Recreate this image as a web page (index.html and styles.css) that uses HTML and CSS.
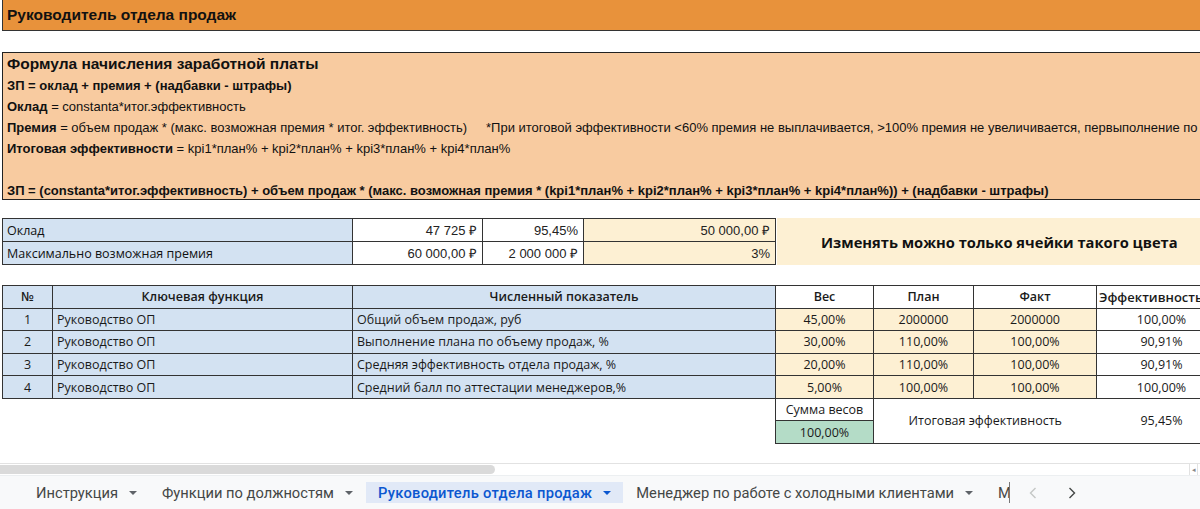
FILE: index.html
```html
<!DOCTYPE html>
<html lang="ru">
<head>
<meta charset="utf-8">
<title>Руководитель отдела продаж</title>
<link rel="stylesheet" href="styles.css">
</head>
<body>
<div class="page">
  <main class="sheet">
    <div class="title-bar">Руководитель отдела продаж</div>

    <section class="formula">
      <div class="f-title">Формула начисления заработной платы</div>
      <div class="f-line bold">ЗП = оклад + премия + (надбавки - штрафы)</div>
      <div class="f-line"><b>Оклад</b> = constanta*итог.эффективность</div>
      <div class="f-line"><b>Премия</b> = объем продаж * (макс. возможная премия * итог. эффективность)<span class="note">*При итоговой эффективности &lt;60% премия не выплачивается, &gt;100% премия не увеличивается, первыполнение по</span></div>
      <div class="f-line"><b>Итоговая эффективности</b> = kpi1*план% + kpi2*план% + kpi3*план% + kpi4*план%</div>
      <div class="f-line"></div>
      <div class="f-line bold">ЗП = (constanta*итог.эффективность) + объем продаж * (макс. возможная премия * (kpi1*план% + kpi2*план% + kpi3*план% + kpi4*план%)) + (надбавки - штрафы)</div>
    </section>

    <div class="salary-row">
      <table class="salary">
        <colgroup><col class="c-label"><col class="c-v1"><col class="c-v2"><col class="c-v3"></colgroup>
        <tr>
          <td class="lbl blue">Оклад</td>
          <td class="num">47 725 ₽</td>
          <td class="num">95,45%</td>
          <td class="num peach">50 000,00 ₽</td>
        </tr>
        <tr>
          <td class="lbl blue">Максимально возможная премия</td>
          <td class="num">60 000,00 ₽</td>
          <td class="num">2 000 000 ₽</td>
          <td class="num peach">3%</td>
        </tr>
      </table>
      <div class="notice">Изменять можно только ячейки такого цвета</div>
    </div>

    <table class="kpi">
      <colgroup>
        <col class="k-no"><col class="k-func"><col class="k-ind"><col class="k-w"><col class="k-plan"><col class="k-fact"><col class="k-eff">
      </colgroup>
      <tr class="head">
        <th class="blue">№</th>
        <th class="blue">Ключевая функция</th>
        <th class="blue">Численный показатель</th>
        <th>Вес</th>
        <th>План</th>
        <th>Факт</th>
        <th class="eff-head">Эффективность</th>
      </tr>
      <tr>
        <td class="blue ctr">1</td><td class="blue">Руководство ОП</td><td class="blue">Общий объем продаж, руб</td>
        <td class="peach ctr">45,00%</td><td class="peach ctr">2000000</td><td class="peach ctr">2000000</td><td class="ctr">100,00%</td>
      </tr>
      <tr>
        <td class="blue ctr">2</td><td class="blue">Руководство ОП</td><td class="blue">Выполнение плана по объему продаж, %</td>
        <td class="peach ctr">30,00%</td><td class="peach ctr">110,00%</td><td class="peach ctr">100,00%</td><td class="ctr">90,91%</td>
      </tr>
      <tr>
        <td class="blue ctr">3</td><td class="blue">Руководство ОП</td><td class="blue">Средняя эффективность отдела продаж, %</td>
        <td class="peach ctr">20,00%</td><td class="peach ctr">110,00%</td><td class="peach ctr">100,00%</td><td class="ctr">90,91%</td>
      </tr>
      <tr>
        <td class="blue ctr">4</td><td class="blue">Руководство ОП</td><td class="blue">Средний балл по аттестации менеджеров,%</td>
        <td class="peach ctr">5,00%</td><td class="peach ctr">100,00%</td><td class="peach ctr">100,00%</td><td class="ctr">100,00%</td>
      </tr>
      <tr class="sum">
        <td class="none" colspan="3" rowspan="2"></td>
        <td class="ctr sum-lbl">Сумма весов</td>
        <td class="ctr total" colspan="2" rowspan="2">Итоговая эффективность</td>
        <td class="ctr total-val" rowspan="2">95,45%</td>
      </tr>
      <tr class="sum">
        <td class="ctr green">100,00%</td>
      </tr>
    </table>
  </main>

  <div class="hscroll">
    <div class="thumb"></div>
    <span class="scroll-btn">◂</span>
  </div>

  <nav class="tabs">
    <div class="tab-list">
      <div class="tab">Инструкция<span class="caret"></span></div>
      <div class="tab">Функции по должностям<span class="caret"></span></div>
      <div class="tab active">Руководитель отдела продаж<span class="caret"></span></div>
      <div class="tab">Менеджер по работе с холодными клиентами<span class="caret"></span></div>
      <div class="tab">Менеджер по работе с клиентами<span class="caret"></span></div>
    </div>
    <div class="tab-nav">
      <span class="nav-btn disabled"><svg width="8" height="12" viewBox="0 0 8 12"><path d="M6.5 1 L1.5 6 L6.5 11" fill="none" stroke="currentColor" stroke-width="1.4"/></svg></span>
      <span class="nav-btn"><svg width="8" height="12" viewBox="0 0 8 12"><path d="M1.5 1 L6.5 6 L1.5 11" fill="none" stroke="currentColor" stroke-width="1.4"/></svg></span>
    </div>
  </nav>
</div>
</body>
</html>
```

FILE: styles.css
```css
* { box-sizing: border-box; }
html, body { margin: 0; padding: 0; background: #fff; }
body { font-family: "Liberation Sans", Arial, sans-serif; color: #111; }

.page {
  width: 1200px;
  height: 509px;
  overflow: hidden;
  display: flex;
  flex-direction: column;
}

.sheet {
  height: 463px;
  overflow: hidden;
  flex: none;
}

.title-bar {
  margin-left: 2px;
  width: 1260px;
  height: 31px;
  background: #e8923b;
  border-left: 1px solid #333;
  border-bottom: 1px solid #333;
  font-weight: bold;
  font-size: 15.5px;
  line-height: 30px;
  padding-left: 4px;
  color: #111;
}

.formula {
  margin-top: 21px;
  margin-left: 2px;
  width: 1260px;
  height: 148px;
  background: #f8cba0;
  border: 1px solid #222;
  padding-left: 4px;
  white-space: nowrap;
}
.f-title {
  height: 22px;
  line-height: 22px;
  font-size: 15.5px;
  font-weight: bold;
}
.f-line {
  height: 21px;
  line-height: 21px;
  font-size: 13px;
}
.f-line.bold { font-weight: bold; }
.note { padding-left: 19px; }

.salary-row {
  margin-top: 18px;
  display: flex;
  align-items: flex-start;
}
table { border-collapse: collapse; table-layout: fixed; }
.salary { margin-left: 2px; width: 773px; }
.c-label { width: 350px; }
.c-v1 { width: 130px; }
.c-v2 { width: 101px; }
.c-v3 { width: 192px; }
.salary td {
  height: 23px;
  padding: 0 4px;
  border: 1px solid #333;
  font-size: 13px;
  white-space: nowrap;
}
.salary .lbl { font-family: "Open Sans", "Noto Sans", sans-serif; font-size: 12.5px; }
.salary .num { text-align: right; padding-right: 5px; color: #222; }

.blue { background: #d3e2f2; }
.peach { background: #fdf0d3; }
.green { background: #b4dcc7; }

.notice {
  flex: 1;
  height: 47px;
  margin-left: 1px;
  background: #fdf0d3;
  display: flex;
  align-items: center;
  padding-left: 44px;
  font-family: "Open Sans", "Noto Sans", sans-serif;
  font-weight: bold;
  font-size: 14.7px;
  color: #111;
  white-space: nowrap;
}

.kpi-wrap { overflow: hidden; }
.kpi {
  margin-top: 20px;
  margin-left: 2px;
  width: 1224px;
  font-family: "Open Sans", "Noto Sans", sans-serif;
  font-size: 12.5px;
  color: #1a1a1a;
}
.k-no { width: 50px; }
.k-func { width: 300px; }
.k-ind { width: 423px; }
.k-w { width: 98px; }
.k-plan { width: 100px; }
.k-fact { width: 123px; }
.k-eff { width: 130px; }

.kpi th, .kpi td {
  height: 22.6px;
  padding: 0 4px;
  border: 1px solid #333;
  white-space: nowrap;
  overflow: hidden;
}
.kpi th { font-weight: 600; text-align: center; }
.kpi th.eff-head { text-align: left; padding-left: 2px; font-size: 13px; }
.kpi td { text-align: left; }
.kpi td.ctr { text-align: center; }
.kpi td.none { border: none; border-top: 1px solid #333; background: #fff; }
.kpi .sum td { height: 22.5px; }
.kpi td.total, .kpi td.total-val { border-left: none; border-right: none; }
.kpi td.total { border-left: 1px solid #333; }

.hscroll {
  position: relative;
  height: 12px;
  border-top: 1px solid #e2e2e2;
  flex: none;
}
.thumb {
  width: 495px;
  height: 9px;
  margin-top: 1px;
  background: #dadada;
  border-radius: 0 5px 5px 0;
}
.scroll-btn {
  position: absolute;
  right: 2px;
  top: 0;
  width: 9px;
  height: 11px;
  font-size: 7px;
  line-height: 11px;
  text-align: center;
  color: #888;
  border-left: 1px solid #e2e2e2;
  border-right: 1px solid #e2e2e2;
}

.tabs {
  flex: 1;
  background: #f8f9fa;
  border-top: 1px solid #eceff1;
  display: flex;
  align-items: stretch;
  font-family: Roboto, "Noto Sans", sans-serif;
  font-size: 14.7px;
  color: #444746;
}
.tab-list {
  margin-left: 24px;
  width: 986px;
  display: flex;
  gap: 1px;
  overflow: hidden;
  border-right: 1px solid #777;
  margin-top: 6px;
  margin-bottom: 6px;
}
.tab {
  flex: none;
  display: flex;
  align-items: center;
  padding: 0 12px;
  white-space: nowrap;
  margin: -6px 0;
}
.tab.active {
  background: #e1e9f7;
  color: #0b57d0;
  font-weight: 500;
  letter-spacing: 0.3px;
}
.caret {
  display: inline-block;
  margin-left: 11px;
  width: 0;
  height: 0;
  border-left: 4px solid transparent;
  border-right: 4px solid transparent;
  border-top: 4px solid #5f6368;
}
.tab.active .caret { border-top-color: #0b57d0; }

.tab-nav {
  display: flex;
  align-items: center;
  gap: 31px;
  margin-left: 19px;
}
.nav-btn { display: flex; color: #444746; }
.nav-btn.disabled { color: #c4c7c5; }
```
